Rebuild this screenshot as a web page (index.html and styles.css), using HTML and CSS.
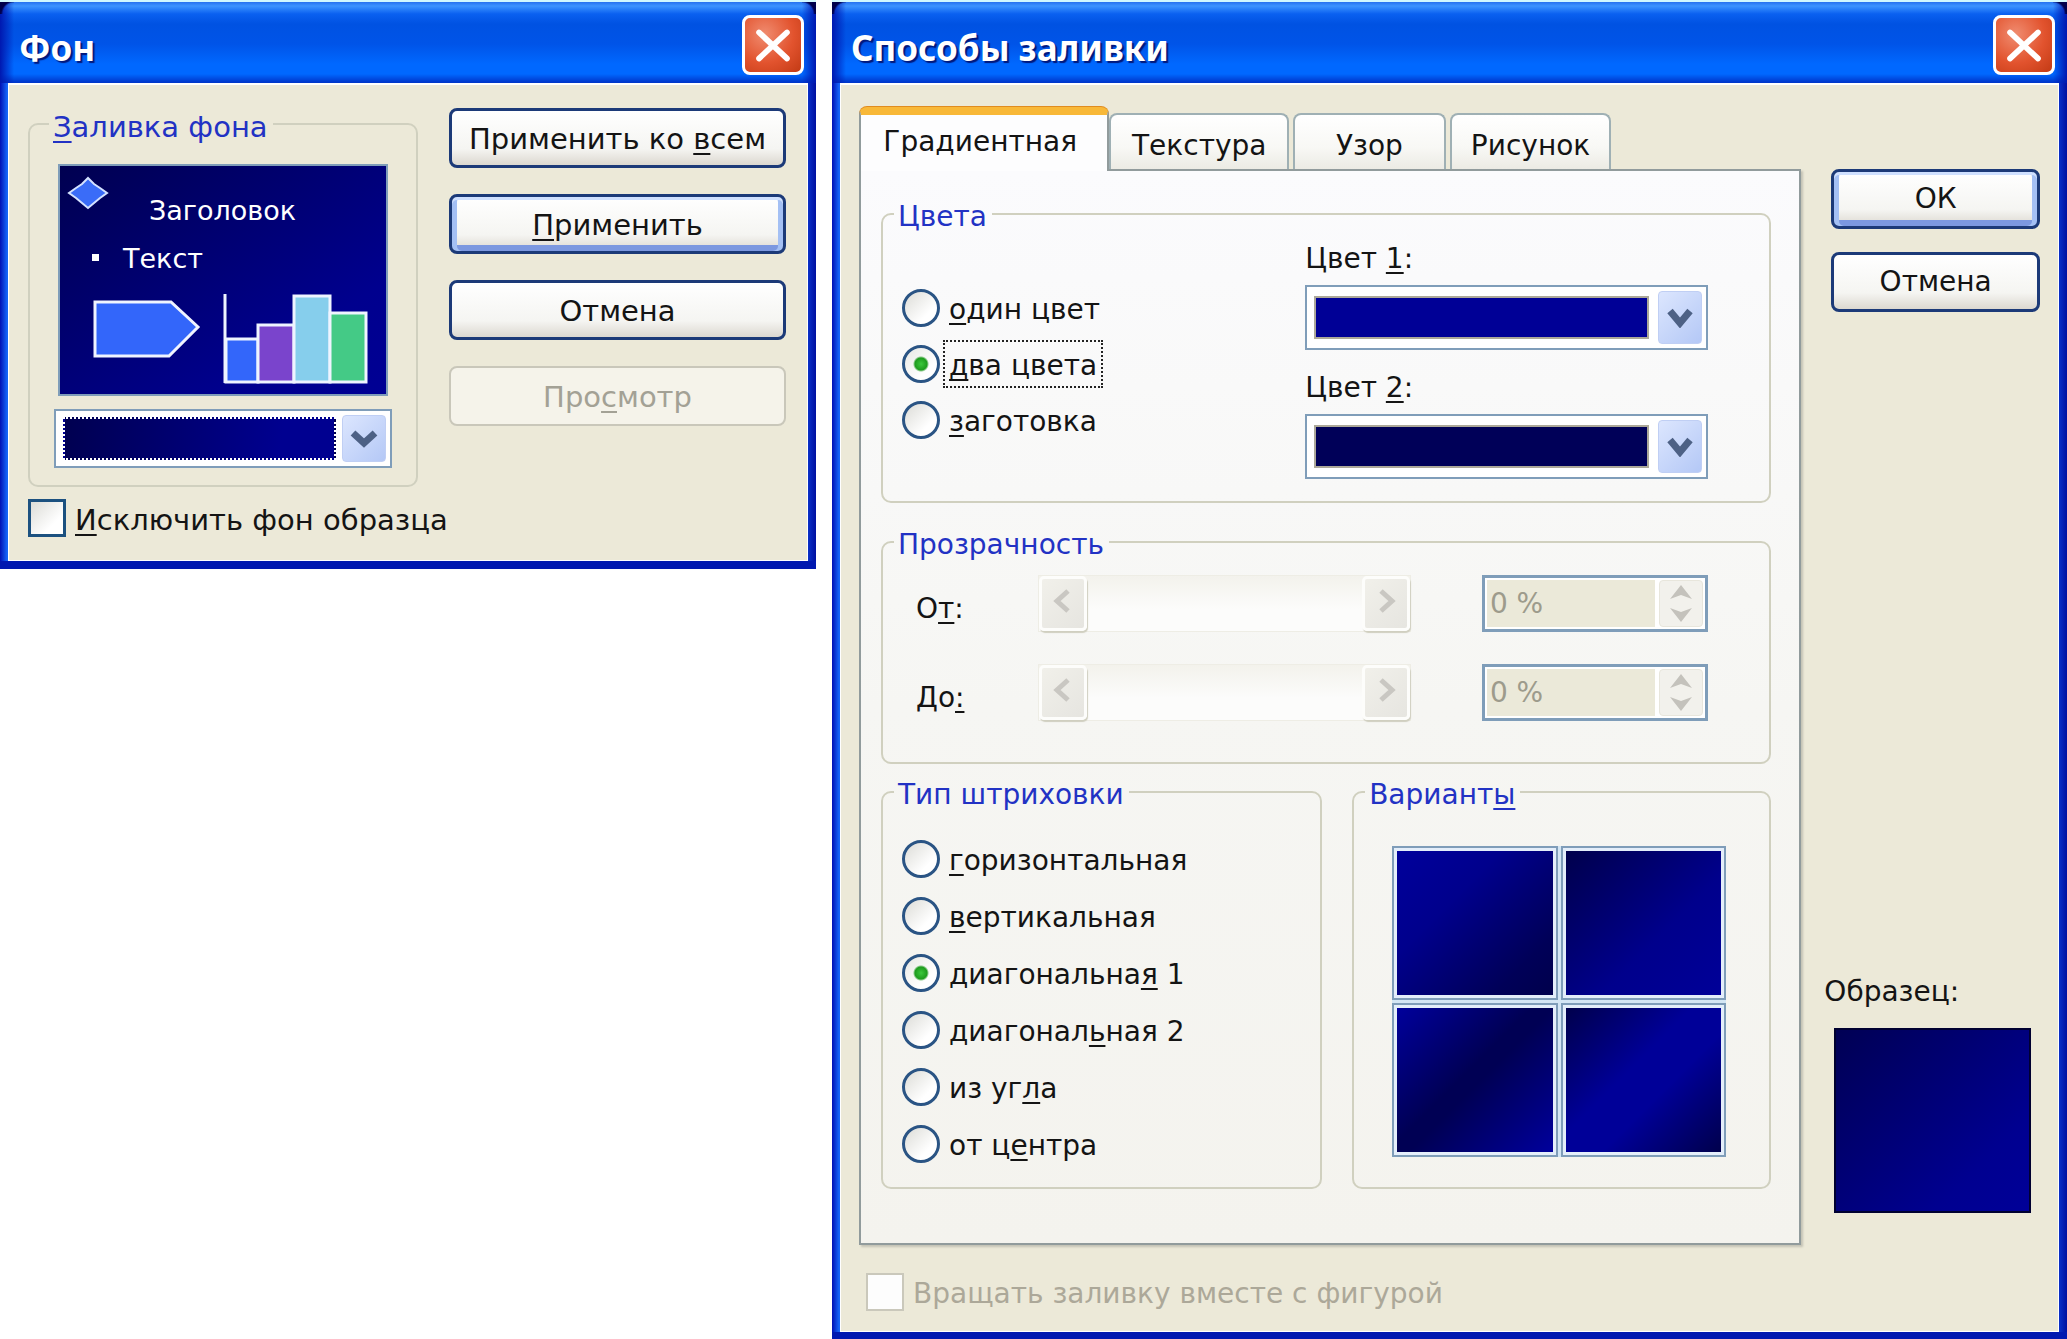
FILE: index.html
```html
<!DOCTYPE html>
<html lang="ru">
<head>
<meta charset="utf-8">
<title>Способы заливки</title>
<link rel="stylesheet" href="styles.css">
</head>
<body>
<main class="desktop">

  <section class="window window-background" aria-labelledby="background-title">
    <header class="titlebar">
      <h1 class="title" id="background-title">Фон</h1>
      <button class="close" type="button" aria-label="Закрыть">
        <svg viewBox="0 0 60 56" preserveAspectRatio="none" aria-hidden="true"><path d="M15 15 45 42M45 15 15 42"/></svg>
      </button>
    </header>
    <form class="client background-client">
      <div class="background-row">
        <fieldset class="group background-group">
          <legend><u>З</u>аливка фона</legend>
          <svg class="slide" viewBox="0 0 330 232" role="img" aria-label="Образец слайда">
            <defs>
              <linearGradient id="slide-fill" x1="0" y1="0" x2="1" y2="1">
                <stop offset="0" stop-color="#000050"/>
                <stop offset="0.75" stop-color="#00008e"/>
                <stop offset="1" stop-color="#000094"/>
              </linearGradient>
            </defs>
            <rect x="1" y="1" width="328" height="230" fill="url(#slide-fill)" stroke="#7f9db9" stroke-width="2"/>
            <path d="M30 14 36 20 42 24 49 29 42 34 36 39 30 44 24 39 18 34 11 29 18 24 24 20Z" fill="#3a6cf8" stroke="#d4e2ff" stroke-width="2"/>
            <text class="slide-text" x="91" y="56">Заголовок</text>
            <rect x="34" y="90" width="7" height="7" fill="#fff"/>
            <text class="slide-text" x="65" y="104">Текст</text>
            <path d="M37 138H113L140 163 111 192H37Z" fill="#3366fa" stroke="#f0f4ff" stroke-width="3"/>
            <g stroke="#eef4ff" stroke-width="3">
              <path d="M168 175H200V218H168Z" fill="#3366fa"/>
              <path d="M200 161H236V218H200Z" fill="#7a44cc"/>
              <path d="M236 132H272V218H236Z" fill="#86ceec"/>
              <path d="M272 149H308V218H272Z" fill="#44ca86"/>
              <path d="M167 130V219"/>
            </g>
          </svg>
          <div class="combo combo-fill">
            <select class="swatch swatch-focused" aria-label="Заливка фона"><option></option></select>
            <span class="combo-arrow"><svg viewBox="0 0 28 20" aria-hidden="true"><path d="M3 4 14 14 25 4"/></svg></span>
          </div>
        </fieldset>
        <div class="button-stack">
          <button class="button" type="button">Применить ко <u>в</u>сем</button>
          <button class="button button-default" type="button"><u>П</u>рименить</button>
          <button class="button" type="button">Отмена</button>
          <button class="button" type="button" disabled>Про<u>с</u>мотр</button>
        </div>
      </div>
      <label class="check"><input type="checkbox"><span><u>И</u>сключить фон образца</span></label>
    </form>
  </section>

  <section class="window window-fill" aria-labelledby="fill-title">
    <header class="titlebar">
      <h1 class="title" id="fill-title">Способы заливки</h1>
      <button class="close" type="button" aria-label="Закрыть">
        <svg viewBox="0 0 60 56" preserveAspectRatio="none" aria-hidden="true"><path d="M15 15 45 42M45 15 15 42"/></svg>
      </button>
    </header>
    <form class="client fill-client">
      <div class="fill-row">
        <div class="tabbed">
          <div class="tabs" role="tablist">
            <button class="tab" role="tab" type="button" aria-selected="true">Градиентная</button>
            <button class="tab" role="tab" type="button">Текстура</button>
            <button class="tab tab-spaced" role="tab" type="button">Узор</button>
            <button class="tab tab-spaced" role="tab" type="button">Рисунок</button>
          </div>
          <div class="panel" role="tabpanel">
            <fieldset class="group colors">
              <legend>Цвета</legend>
              <div class="colors-row">
                <div class="radios">
                  <label class="radio"><input type="radio" name="colors"><span><u>о</u>дин цвет</span></label>
                  <label class="radio"><input type="radio" name="colors" checked><span class="focus"><u>д</u>ва цвета</span></label>
                  <label class="radio"><input type="radio" name="colors"><span><u>з</u>аготовка</span></label>
                </div>
                <div class="color-fields">
                  <label for="color1">Цвет <u>1</u>:</label>
                  <div class="combo">
                    <select id="color1" class="swatch swatch-blue"><option></option></select>
                    <span class="combo-arrow"><svg viewBox="0 0 28 20" aria-hidden="true"><path d="M4 3 14 15 24 3"/></svg></span>
                  </div>
                  <label for="color2">Цвет <u>2</u>:</label>
                  <div class="combo">
                    <select id="color2" class="swatch swatch-navy"><option></option></select>
                    <span class="combo-arrow"><svg viewBox="0 0 28 20" aria-hidden="true"><path d="M4 3 14 15 24 3"/></svg></span>
                  </div>
                </div>
              </div>
            </fieldset>

            <fieldset class="group transparency">
              <legend>Прозрачность</legend>
              <div class="opacity-row">
                <label for="from">О<u>т</u>:</label>
                <div class="scroll">
                  <button class="scroll-button" type="button" disabled aria-label="Меньше"><svg viewBox="0 0 24 28" aria-hidden="true"><path d="M17 4 6 14 17 24"/></svg></button>
                  <input type="range" disabled value="0" aria-label="Прозрачность от">
                  <button class="scroll-button" type="button" disabled aria-label="Больше"><svg viewBox="0 0 24 28" aria-hidden="true"><path d="M7 4 18 14 7 24"/></svg></button>
                </div>
                <div class="spinner">
                  <input id="from" type="text" value="0 %" disabled>
                  <div class="spin">
                    <button type="button" disabled aria-label="Увеличить"><svg viewBox="0 0 22 14" aria-hidden="true"><path d="M11 0 22 14 11 10 0 14Z"/></svg></button>
                    <button type="button" disabled aria-label="Уменьшить"><svg viewBox="0 0 22 14" aria-hidden="true"><path d="M0 0 11 4 22 0 11 14Z"/></svg></button>
                  </div>
                </div>
              </div>
              <div class="opacity-row">
                <label for="to">До<u>:</u></label>
                <div class="scroll">
                  <button class="scroll-button" type="button" disabled aria-label="Меньше"><svg viewBox="0 0 24 28" aria-hidden="true"><path d="M17 4 6 14 17 24"/></svg></button>
                  <input type="range" disabled value="0" aria-label="Прозрачность до">
                  <button class="scroll-button" type="button" disabled aria-label="Больше"><svg viewBox="0 0 24 28" aria-hidden="true"><path d="M7 4 18 14 7 24"/></svg></button>
                </div>
                <div class="spinner">
                  <input id="to" type="text" value="0 %" disabled>
                  <div class="spin">
                    <button type="button" disabled aria-label="Увеличить"><svg viewBox="0 0 22 14" aria-hidden="true"><path d="M11 0 22 14 11 10 0 14Z"/></svg></button>
                    <button type="button" disabled aria-label="Уменьшить"><svg viewBox="0 0 22 14" aria-hidden="true"><path d="M0 0 11 4 22 0 11 14Z"/></svg></button>
                  </div>
                </div>
              </div>
            </fieldset>

            <div class="shading-row">
              <fieldset class="group shading">
                <legend>Тип штриховки</legend>
                <div class="radios">
                  <label class="radio"><input type="radio" name="shading"><span><u>г</u>оризонтальная</span></label>
                  <label class="radio"><input type="radio" name="shading"><span><u>в</u>ертикальная</span></label>
                  <label class="radio"><input type="radio" name="shading" checked><span>диагональна<u>я</u> 1</span></label>
                  <label class="radio"><input type="radio" name="shading"><span>диагонал<u>ь</u>ная 2</span></label>
                  <label class="radio"><input type="radio" name="shading"><span>из уг<u>л</u>а</span></label>
                  <label class="radio"><input type="radio" name="shading"><span>от ц<u>е</u>нтра</span></label>
                </div>
              </fieldset>
              <fieldset class="group variants">
                <legend>Вариант<u>ы</u></legend>
                <div class="variant-grid">
                  <button class="variant variant-a" type="button" aria-label="Вариант 1"><span></span></button>
                  <button class="variant variant-b" type="button" aria-label="Вариант 2"><span></span></button>
                  <button class="variant variant-c" type="button" aria-label="Вариант 3"><span></span></button>
                  <button class="variant variant-d" type="button" aria-label="Вариант 4"><span></span></button>
                </div>
              </fieldset>
            </div>
          </div>
        </div>

        <aside class="side">
          <div class="button-stack">
            <button class="button button-default" type="button">ОК</button>
            <button class="button" type="button">Отмена</button>
          </div>
          <figure class="sample">
            <figcaption>Образец:</figcaption>
            <div class="sample-fill"></div>
          </figure>
        </aside>
      </div>
      <label class="check check-disabled"><input type="checkbox" disabled><span>Вращать заливку вместе с фигурой</span></label>
    </form>
  </section>

</main>
</body>
</html>
```

FILE: styles.css
```css
* { box-sizing: border-box; }

body {
  margin: 0;
  background: #fff;
  color: #141414;
  font-family: "DejaVu Sans", "Noto Sans", sans-serif;
  font-size: 28px;
  line-height: 32px;
}

button, input, select { font: inherit; color: inherit; margin: 0; }

u { text-decoration-thickness: 2px; text-underline-offset: 4px; text-decoration-skip-ink: none; }

.desktop {
  display: grid;
  grid-template-columns: minmax(0, 816fr) minmax(0, 1235fr);
  align-items: start;
  gap: 16px;
}

/* window frame */
.window {
  background: linear-gradient(90deg, #0010b4, #1464f8 7px, #0a50e8 50%, #0a30c8 calc(100% - 8px), #0010a0);
  padding: 0 8px 8px;
  box-shadow: inset 0 -8px 0 #0018b0;
}

.titlebar {
  display: flex;
  align-items: center;
  justify-content: space-between;
  height: 83px;
  margin: 0 -8px;
  padding: 6px 12px 0 19px;
  background:
    linear-gradient(#d0f8ff 0 2px, transparent 2px),
    radial-gradient(circle at 100% 100%, transparent 11px, #00004c 13px) 0 0 / 14px 14px no-repeat,
    radial-gradient(circle at 0 100%, transparent 11px, #00004c 13px) 100% 0 / 14px 14px no-repeat,
    linear-gradient(90deg, #0018b0, transparent 14px calc(100% - 14px), #0018b0),
    linear-gradient(#1a60e8, #3c94ff 6px, #0a60f0 14px, #0052e2 24px, #0054e8 44px, #0068ff 64px, #0068ff 74px, #0038cc 82px);
}

.title {
  margin: 0;
  padding-top: 6px;
  color: #fff;
  font-family: "Noto Sans", "Open Sans", sans-serif;
  font-size: 35px;
  line-height: 48px;
  font-weight: 700;
  text-shadow: 2px 2px 1px #00187c;
}

.close {
  flex: none;
  width: 62px;
  height: 60px;
  padding: 0;
  border: 3px solid #fff;
  border-radius: 8px;
  background: radial-gradient(circle at 35% 30%, #f08c70, #e2532e 55%, #c23a14);
}
.close svg { display: block; width: 100%; height: 100%; fill: none; stroke: #fff; stroke-width: 6; stroke-linecap: round; }

.client { border: 1px solid #fff; border-width: 2px 1px 1px; background: #ece9d8; }

/* group boxes */
.group {
  --inset: 19px;
  --legend-inset: 11px;
  min-width: 0;
  margin: 0;
  padding-left: var(--inset);
  border: 2px solid #d0d0bf;
  border-radius: 10px;
}
.group legend {
  margin-left: calc(var(--legend-inset) - var(--inset));
  padding: 6px 5px 0 4px;
  color: #2232c4;
  line-height: 26px;
}

/* push buttons */
.button-stack { display: flex; flex-direction: column; gap: 26px; }
.button {
  height: 60px;
  padding: 2px 4px 0;
  border: 3px solid #1c3a78;
  border-radius: 8px;
  background: linear-gradient(#fff, #f5f5f2 70%, #dcd8d0);
  white-space: nowrap;
}
.button-default { box-shadow: inset 0 3px #cfe0ff, inset 5px 0 #a4c0f4, inset -5px 0 #a4c0f4, inset 0 -6px #7c98e0; }
.button:disabled { border: 2px solid #c9c7ba; background: #f5f3ea; color: #a3a195; }

/* combo boxes */
.combo {
  display: flex;
  align-items: stretch;
  gap: 6px;
  height: 65px;
  padding: 4px;
  border: 2px solid #7f9db9;
  background: #fff;
}
.swatch { appearance: none; flex: 1; min-width: 0; margin: 5px 3px; padding: 0; border: 2px solid #aca899; border-radius: 0; }
.swatch-blue { background: #000096; }
.swatch-navy { background: #000058; }
.swatch-focused { margin: 2px 0 2px 3px; background: linear-gradient(100deg, #000050, #000090 80%); border: 2px dotted #fff; }
.combo-arrow {
  flex: none;
  display: grid;
  place-items: center;
  width: 44px;
  border: 1px solid #c0cff4;
  border-radius: 4px;
  background: linear-gradient(135deg, #dce6fe, #b4c8f6);
}
.combo-arrow svg { width: 28px; height: 20px; fill: none; stroke: #4d6185; stroke-width: 7; }

/* check boxes and radio buttons */
.check, .radio { display: flex; align-items: center; gap: 9px; }
.check span, .radio span { padding-top: 4px; }
.check input {
  appearance: none;
  flex: none;
  width: 38px;
  height: 38px;
  border: 3px solid #1c5180;
  background: linear-gradient(135deg, #dcdcd7, #fff 70%);
}
.check input:disabled { border: 2px solid #cac8bb; background: #fdfdfd; }
.check-disabled { color: #aca899; }

.radio input {
  appearance: none;
  flex: none;
  width: 38px;
  height: 38px;
  border: 3px solid #2a5484;
  border-radius: 50%;
  background: linear-gradient(135deg, #dcdcd7, #fff 70%);
}
.radio input:checked { background: radial-gradient(circle, #3cc83c, #1e9c1e 6px, transparent 8px), linear-gradient(135deg, #e8e8e4, #fff 70%); }
.radio .focus { outline: 2px dotted #222; outline-offset: 4px; }

/* background window */
.background-client { padding: 23px 21px 23px 19px; font-size: 29px; }
.background-row {
  display: grid;
  grid-template-columns: minmax(0, 390fr) minmax(0, 337fr);
  align-items: start;
  gap: 31px;
  margin-bottom: 12px;
}
.background-group { --inset: 24px; --legend-inset: 19px; padding: 24px 24px 17px var(--inset); }
.slide { display: block; width: calc(100% - 8px); margin: 0 4px 13px; }
.slide-text { fill: #fff; font-size: 27px; }
.combo-fill { height: 59px; }

/* fill window */
.fill-client { padding: 22px 18px 20px; }
.fill-row {
  display: grid;
  grid-template-columns: minmax(0, 944fr) minmax(0, 209fr);
  gap: 30px;
  margin-bottom: 28px;
}
.tabs {
  display: grid;
  grid-template-columns: 251fr 180fr 157fr 166fr;
  align-items: end;
  padding-right: 190px;
}
.tab {
  min-width: 0;
  height: 56px;
  padding: 8px 0 0;
  border: 2px solid #9fb0b4;
  border-bottom: 0;
  border-radius: 8px 8px 0 0;
  background: linear-gradient(#fff, #f8f8f5 60%, #ecebe4);
  white-space: nowrap;
}
.tab-spaced { margin-left: 4px; }
.tab[aria-selected="true"] {
  position: relative;
  height: 64px;
  margin-bottom: -2px;
  padding: 0 8px 2px 0;
  border-color: #919b9c;
  border-top: 8px solid #f8b838;
  background: #fdfdfe;
  box-shadow: 0 -1px #e08c20;
}
.panel {
  padding: 27px 28px 54px 20px;
  border: 2px solid #919b9c;
  background: linear-gradient(#fbfbfd, #f6f6f3 50%, #f4f3ee);
  box-shadow: 2px 2px 2px #c4c2b4;
}

.colors { padding: 0 61px 22px var(--inset); margin-bottom: 23px; }
.colors-row { display: grid; grid-template-columns: 1fr 1fr; }
.colors .radios { padding-top: 50px; }
.colors .radio { height: 56px; }
.color-fields { display: flex; flex-direction: column; padding-top: 13px; }
.color-fields label { margin-bottom: 10px; }
.color-fields .combo { margin-bottom: 22px; }
.color-fields .combo:last-child { margin-bottom: 0; }

.transparency {
  --inset: 33px;
  display: flex;
  flex-direction: column;
  gap: 32px;
  padding: 17px 61px 41px var(--inset);
  margin-bottom: 12px;
}
.opacity-row { display: grid; grid-template-columns: 122px minmax(0, 445fr) minmax(0, 227fr); align-items: center; }
.opacity-row label { padding-top: 10px; }
.scroll { display: flex; height: 57px; margin-right: 71px; border: 1px solid #eeede5; background: linear-gradient(#f3f2ec, #fcfcfb 60%); }
.scroll input { appearance: none; flex: 1; min-width: 0; background: transparent; }
.scroll input::-webkit-slider-thumb { appearance: none; width: 0; }
.scroll-button {
  flex: none;
  display: grid;
  place-items: center;
  width: 48px;
  padding: 0 0 6px;
  border: 3px solid #fdfdfb;
  border-radius: 5px;
  background: linear-gradient(135deg, #f1f0ea, #e6e5e0);
  box-shadow: 1px 2px 1px #d0cfc0;
}
.scroll-button svg { width: 24px; height: 28px; fill: none; stroke: #c9c7c2; stroke-width: 5; }
.spinner { display: flex; height: 57px; border: 3px solid #7f9db9; background: #fff; padding: 2px; }
.spinner input { flex: 1; width: 0; min-width: 0; padding: 0 3px; border: 0; background: #ebe9d9; color: #9d9b8c; }
.spin { flex: none; width: 44px; margin-left: 4px; display: flex; flex-direction: column; border: 1px solid #e8e6dc; border-radius: 4px; background: #f2f1ec; }
.spin button { flex: 1; display: grid; place-items: center; min-height: 0; padding: 0; border: 0; background: none; }
.spin svg { display: block; width: 22px; height: 14px; fill: #c4c2bc; }

.shading-row { display: grid; grid-template-columns: minmax(0, 442fr) minmax(0, 420fr); gap: 30px; }
.shading { padding: 22px 12px 14px var(--inset); }
.shading .radio { height: 57px; }
.variants { --inset: 38px; padding: 38px 43px 30px var(--inset); }
.variant-grid { display: grid; grid-template-columns: 1fr 1fr; gap: 3px; background: #d4e6f4; }
.variant { height: 154px; padding: 3px; border: 2px solid #7f9db9; background: #e4eefa; }
.variant span { display: block; height: 100%; }
.variant-a span { background: linear-gradient(135deg, #00009c, #00008c 35%, #000058 80%, #00004c); }
.variant-b span { background: linear-gradient(135deg, #00004c, #00008c 60%, #000098); }
.variant-c span { background: linear-gradient(135deg, #00009c, #000054 45%, #000054 52%, #00009c); }
.variant-d span { background: linear-gradient(135deg, #00004c, #000098 42%, #000098 60%, #00004c); }

.side { display: flex; flex-direction: column; justify-content: space-between; padding: 62px 0 32px; }
.side .button-stack { gap: 23px; }
.side .button { padding-top: 0; }
.sample { margin: 0; }
.sample figcaption { margin: 0 0 20px -7px; }
.sample-fill { height: 185px; margin: 0 9px 0 3px; border: 2px solid #000030; background: linear-gradient(135deg, #000054, #000090 75%, #000098); }
.fill-client .check { margin-left: 7px; }
```
